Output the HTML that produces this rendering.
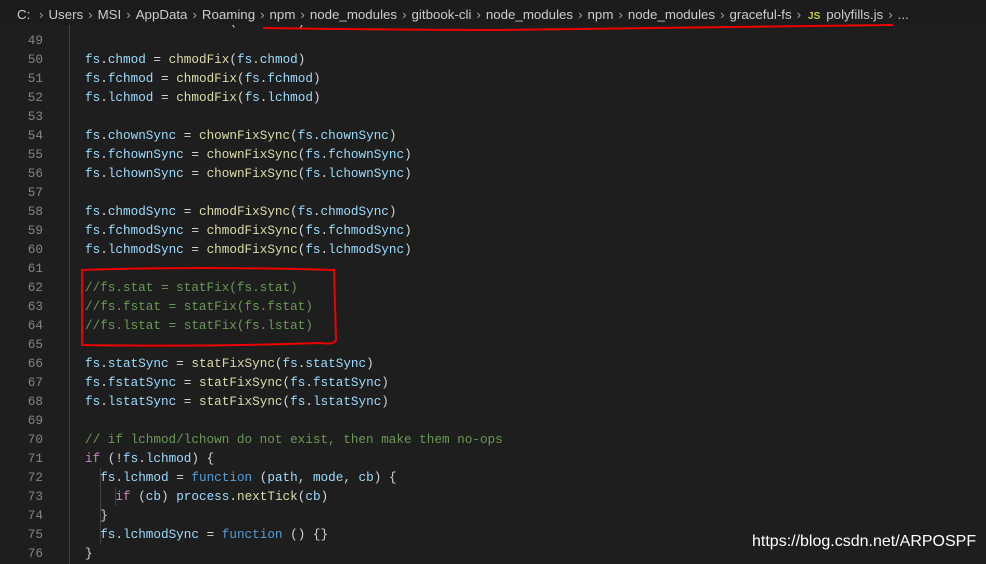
<!DOCTYPE html>
<html><head><meta charset="utf-8"><style>
body{margin:0;width:986px;height:564px;background:#1e1e1e;overflow:hidden;position:relative;font-family:"Liberation Mono",monospace}
.bc{position:absolute;top:0;left:0;width:986px;height:25px;overflow:hidden;background:#1c1c1c;font-family:"Liberation Sans",sans-serif;font-size:13.3px;color:#cccccc;line-height:29px;white-space:nowrap;z-index:2;padding-left:17px;box-sizing:border-box}
.bc .s{color:#a0a0a0;margin:0 5px}
.js{color:#cbcb41;font-weight:bold;font-size:10px;margin:0 6px 0 2px}
.ln{position:absolute;left:0;width:43px;text-align:right;color:#858585;font-size:12.67px}
.cl{position:absolute;left:85px;white-space:pre;color:#d4d4d4;font-size:12.67px}
.l{position:absolute;height:19px;line-height:19px}
.v{color:#9cdcfe}.f{color:#dcdcaa}.k{color:#c586c0}.b{color:#569cd6}.c{color:#6a9955}
.g{position:absolute;left:69px;top:0;width:1px;height:564px;background:#404040}
.wm{position:absolute;left:752px;top:533px;font-family:"Liberation Sans",sans-serif;font-size:16px;color:#fff}
</style></head><body>
<div class="g"></div>
<div style="position:absolute;left:100px;top:468px;width:1px;height:76px;background:#404040"></div>
<div style="position:absolute;left:115px;top:487px;width:1px;height:19px;background:#404040"></div>
<div class="bc">C: <span class="s">›</span>Users<span class="s">›</span>MSI<span class="s">›</span>AppData<span class="s">›</span>Roaming<span class="s">›</span>npm<span class="s">›</span>node_modules<span class="s">›</span>gitbook-cli<span class="s">›</span>node_modules<span class="s">›</span>npm<span class="s">›</span>node_modules<span class="s">›</span>graceful-fs<span class="s">›</span><span class="js">JS</span>polyfills.js<span class="s">›</span>...</div>
<div id="code"></div>
<script>
const L=[
[48,'<span class="v">fs</span>.<span class="v">chown</span> = <span class="f">chownFix</span>(<span class="v">fs</span>.<span class="v">chown</span>)'],
[49,''],
[50,'<span class="v">fs</span>.<span class="v">chmod</span> = <span class="f">chmodFix</span>(<span class="v">fs</span>.<span class="v">chmod</span>)'],
[51,'<span class="v">fs</span>.<span class="v">fchmod</span> = <span class="f">chmodFix</span>(<span class="v">fs</span>.<span class="v">fchmod</span>)'],
[52,'<span class="v">fs</span>.<span class="v">lchmod</span> = <span class="f">chmodFix</span>(<span class="v">fs</span>.<span class="v">lchmod</span>)'],
[53,''],
[54,'<span class="v">fs</span>.<span class="v">chownSync</span> = <span class="f">chownFixSync</span>(<span class="v">fs</span>.<span class="v">chownSync</span>)'],
[55,'<span class="v">fs</span>.<span class="v">fchownSync</span> = <span class="f">chownFixSync</span>(<span class="v">fs</span>.<span class="v">fchownSync</span>)'],
[56,'<span class="v">fs</span>.<span class="v">lchownSync</span> = <span class="f">chownFixSync</span>(<span class="v">fs</span>.<span class="v">lchownSync</span>)'],
[57,''],
[58,'<span class="v">fs</span>.<span class="v">chmodSync</span> = <span class="f">chmodFixSync</span>(<span class="v">fs</span>.<span class="v">chmodSync</span>)'],
[59,'<span class="v">fs</span>.<span class="v">fchmodSync</span> = <span class="f">chmodFixSync</span>(<span class="v">fs</span>.<span class="v">fchmodSync</span>)'],
[60,'<span class="v">fs</span>.<span class="v">lchmodSync</span> = <span class="f">chmodFixSync</span>(<span class="v">fs</span>.<span class="v">lchmodSync</span>)'],
[61,''],
[62,'<span class="c">//fs.stat = statFix(fs.stat)</span>'],
[63,'<span class="c">//fs.fstat = statFix(fs.fstat)</span>'],
[64,'<span class="c">//fs.lstat = statFix(fs.lstat)</span>'],
[65,''],
[66,'<span class="v">fs</span>.<span class="v">statSync</span> = <span class="f">statFixSync</span>(<span class="v">fs</span>.<span class="v">statSync</span>)'],
[67,'<span class="v">fs</span>.<span class="v">fstatSync</span> = <span class="f">statFixSync</span>(<span class="v">fs</span>.<span class="v">fstatSync</span>)'],
[68,'<span class="v">fs</span>.<span class="v">lstatSync</span> = <span class="f">statFixSync</span>(<span class="v">fs</span>.<span class="v">lstatSync</span>)'],
[69,''],
[70,'<span class="c">// if lchmod/lchown do not exist, then make them no-ops</span>'],
[71,'<span class="k">if</span> (!<span class="v">fs</span>.<span class="v">lchmod</span>) {'],
[72,'  <span class="v">fs</span>.<span class="v">lchmod</span> = <span class="b">function</span> (<span class="v">path</span>, <span class="v">mode</span>, <span class="v">cb</span>) {'],
[73,'    <span class="k">if</span> (<span class="v">cb</span>) <span class="v">process</span>.<span class="f">nextTick</span>(<span class="v">cb</span>)'],
[74,'  }'],
[75,'  <span class="v">fs</span>.<span class="v">lchmodSync</span> = <span class="b">function</span> () {}'],
[76,'}']];
let h='';L.forEach(([n,t],i)=>{const y=12+i*19;h+=`<div class="l ln" style="top:${y}px">${n}</div><div class="l cl" style="top:${y}px">${t}</div>`});
document.getElementById('code').innerHTML=h;
</script>
<svg style="position:absolute;left:0;top:0;z-index:3" width="986" height="564">
<path d="M263 28 Q400 30 500 30 Q700 27 893 25" stroke="#e00" stroke-width="2" fill="none"/>
<path d="M82 270 Q200 266 334 270 L336 340 Q334 345 320 343 Q200 347 82 345 Z" stroke="#e00" stroke-width="2" fill="none"/>
</svg>
<div class="wm">https://blog.csdn.net/ARPOSPF</div>
</body></html>
